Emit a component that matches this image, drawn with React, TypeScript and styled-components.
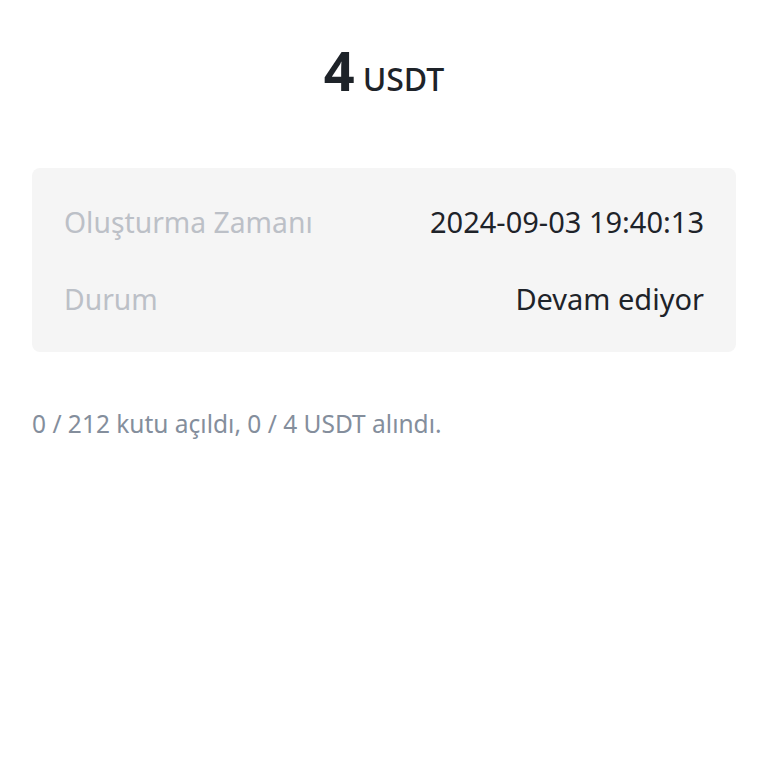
import styled, { createGlobalStyle } from "styled-components";

const GlobalStyle = createGlobalStyle`
  html, body {
    margin: 0;
    padding: 0;
    background: #ffffff;
    font-family: "Noto Sans", "Open Sans", sans-serif;
  }
`;

interface InfoRowProps {
  label: string;
  value: string;
}

const InfoRow = ({ label, value }: InfoRowProps) => (
  <Row>
    <Label>{label}</Label>
    <Value>{value}</Value>
  </Row>
);

const App = () => {
  return (
    <Page>
      <GlobalStyle />
      <AmountBox>
        <Amount>4</Amount>
        <Unit>USDT</Unit>
      </AmountBox>
      <Card>
        <InfoRow label="Oluşturma Zamanı" value="2024-09-03 19:40:13" />
        <InfoRow label="Durum" value="Devam ediyor" />
      </Card>
      <Summary>0 / 212 kutu açıldı, 0 / 4 USDT alındı.</Summary>
    </Page>
  );
};

export default App;

const Page = styled.div`
  width: 768px;
  height: 768px;
  box-sizing: border-box;
  padding: 36px 32px 0;
  background: #ffffff;
`;

const AmountBox = styled.div`
  display: flex;
  justify-content: center;
  align-items: baseline;
  gap: 8px;
  color: #1e2329;
  height: 68px;
`;

const Amount = styled.span`
  font-size: 54px;
  font-weight: 700;
  line-height: 68px;
`;

const Unit = styled.span`
  font-size: 32px;
  font-weight: 500;
`;

const Card = styled.div`
  margin-top: 64px;
  background: #f5f5f5;
  border-radius: 8px;
  padding: 15px 32px;
  display: flex;
  flex-direction: column;
`;

const Row = styled.div`
  display: flex;
  justify-content: space-between;
  align-items: center;
  height: 77px;
`;

const Label = styled.span`
  font-size: 28.3px;
  color: #bcc0c7;
`;

const Value = styled.span`
  font-size: 29px;
  color: #1e2329;
`;

const Summary = styled.p`
  margin: 55px 0 0;
  font-size: 24.5px;
  line-height: 33px;
  color: #848e9c;
`;
